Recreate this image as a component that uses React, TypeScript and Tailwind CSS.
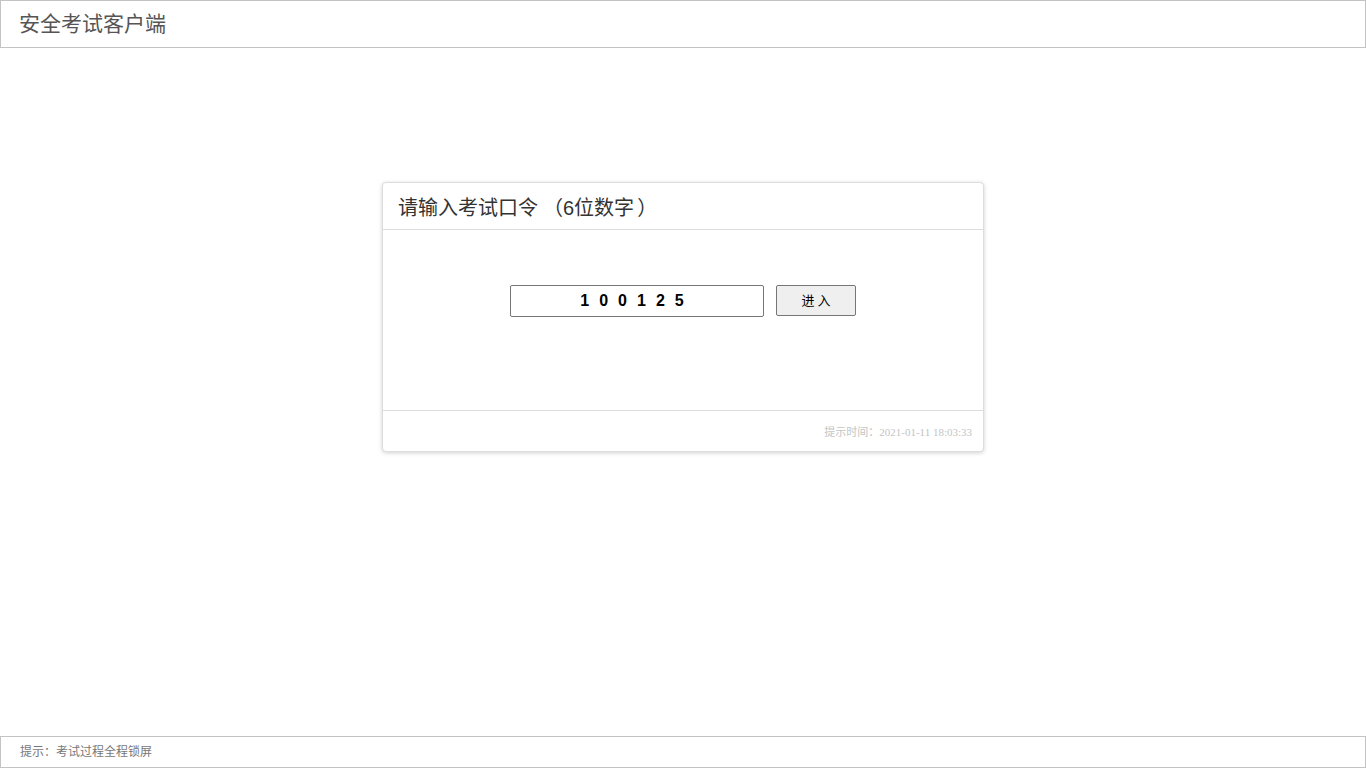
import React from "react";

export default function App() {
  const cjk = { fontFamily: '"Liberation Sans", "Noto Sans CJK SC", sans-serif' };
  return (
    <div className="w-[1366px] h-[768px] flex flex-col bg-white" style={cjk}>
      <header className="h-[48px] shrink-0 border border-[#c3c3c3] flex items-center pl-[18px] pb-[2px]">
        <span className="text-[21px] text-[#555555] leading-none">安全考试客户端</span>
      </header>
      <main className="flex-1 flex justify-center">
        <div className="mt-[134px] w-[602px] h-[270px] self-start rounded-[4px] border border-[#dddddd] shadow-[0_1px_4px_rgba(0,0,0,0.18)] flex flex-col bg-white">
          <div className="h-[47px] border-b border-[#dddddd] flex items-center pl-[15px] pt-[3px]">
            <span className="text-[20px] text-[#333333] leading-none">请输入考试口令<span className="pl-[5px]">（</span><span className="pr-[3px]">6位数字</span><span className="pr-[4px]">）</span></span>
          </div>
          <div className="h-[180px] flex justify-center pt-[55px] gap-[12px]">
            <div className="w-[254px] h-[32px] border border-[#767676] rounded-[2px] flex items-center justify-center">
              <span className="text-[16px] font-bold text-black tracking-[10px]" style={{ fontFamily: '"Liberation Sans", Arial, sans-serif' }}>100125</span>
            </div>
            <button className="w-[80px] h-[31px] border border-[#767676] rounded-[2px] bg-[#efefef] text-[13px] text-black tracking-[3px] pl-[3px]">进入</button>
          </div>
          <div className="flex-1 border-t border-[#dddddd] flex items-end justify-end pr-[11px] pb-[13px]">
            <span className="text-[11px] text-[#c4c4c4] leading-none" style={{ fontFamily: '"Liberation Serif", "Noto Sans CJK SC", serif' }}>提示时间：2021-01-11 18:03:33</span>
          </div>
        </div>
      </main>
      <footer className="h-[32px] shrink-0 border border-[#c3c3c3] flex items-center pl-[19px]">
        <span className="text-[12px] text-[#777777] leading-none">提示：考试过程全程锁屏</span>
      </footer>
    </div>
  );
}
